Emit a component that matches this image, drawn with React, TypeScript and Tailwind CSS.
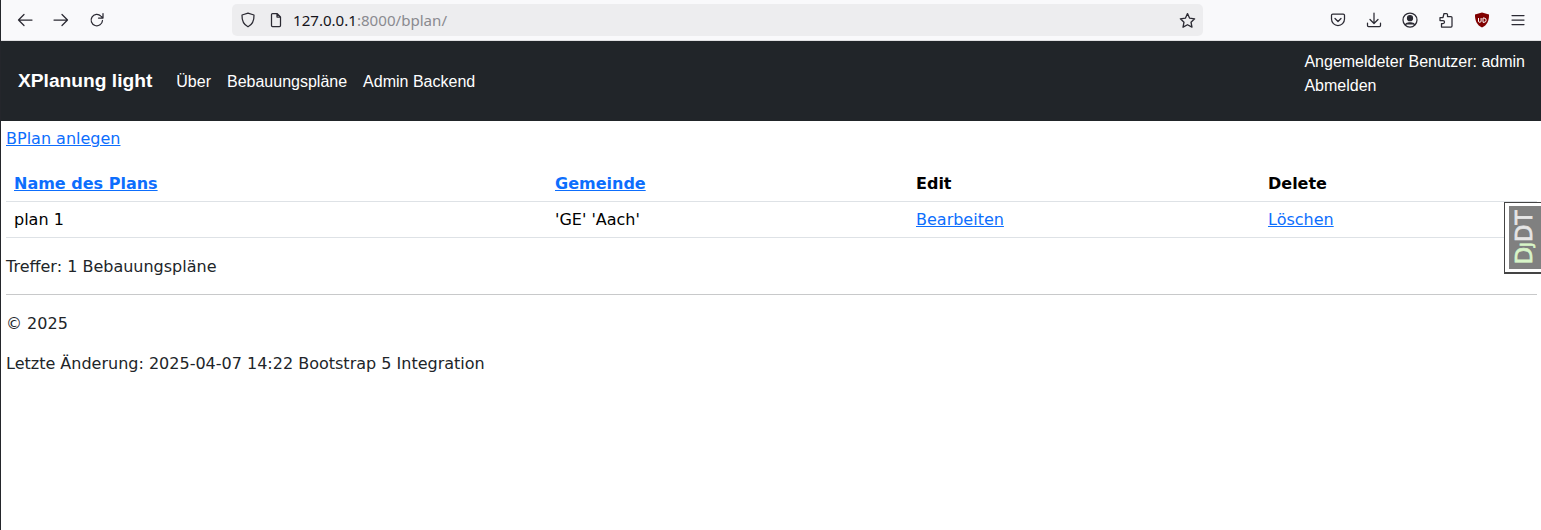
import React from "react";

const Ic = ({ children, cls = "" }: { children: React.ReactNode; cls?: string }) => (
  <svg viewBox="0 0 16 16" fill="none" stroke="#2b2a33" strokeWidth={1.25} strokeLinecap="round" strokeLinejoin="round" className={"w-4 h-4 shrink-0 " + cls}>
    {children}
  </svg>
);

const A = ({ children, cls = "" }: { children: React.ReactNode; cls?: string }) => (
  <a href="#" className={"text-[#0d6efd] underline " + cls}>{children}</a>
);

export default function App() {
  return (
    <div className="relative min-h-[530px] border-l border-[#24262b] bg-white font-['DejaVu_Sans',sans-serif] text-base text-[#212529]">
      <div className="flex h-[41px] items-center border-b border-[#e0e0e2] bg-[#f9f9fb] pl-[16px] pr-[15px]">
        <div className="flex items-center gap-5">
          <Ic><path d="M15 8H1.500M7 2.500 1.500 8 7 13.500" /></Ic>
          <Ic><path d="M1 8h13.500M9 2.500 14.500 8 9 13.500" /></Ic>
          <Ic><path d="M13.500 8.500a5.700 5.700 0 1 1-1.600-4.400L14 6M14 1.500V6H9.500" /></Ic>
        </div>
        <div className="ml-[127px] flex h-8 w-[971px] items-center rounded-[5px] bg-[#ededef] pl-2 pr-[7px]">
          <Ic><path d="M8 1.200 14 3c.2 5.500-1.500 9.500-6 11.800C3.500 12.500 1.800 8.500 2 3z" /></Ic>
          <Ic cls="ml-[12px]"><path d="M3.500 2.500A1 1 0 0 1 4.500 1.500H9L12.500 5v8.500a1 1 0 0 1-1 1h-7a1 1 0 0 1-1-1zM9 1.500V5h3.500" /></Ic>
          <span className="ml-[9px] font-['Noto_Sans',sans-serif] text-[15.1px] text-[#15141a]">127.0.0.1<span className="text-[#8a8a8f]">:8000/bplan/</span></span>
          <Ic cls="ml-auto w-[17px] h-[17px]"><path d="m8 1.500 2 4.300 4.700.6-3.400 3.200.9 4.700L8 12l-4.200 2.300.9-4.700L1.300 6.400 6 5.800z" /></Ic>
        </div>
        <div className="ml-auto flex items-center gap-5">
          <Ic><path d="M2.800 2h10.400c.8 0 1.300.6 1.300 1.300V7a6.500 6.500 0 0 1-13 0V3.300C1.500 2.600 2 2 2.800 2z" /><path d="m5 6.500 3 3 3-3" /></Ic>
          <Ic><path d="M8 1v10M4 7.500 8 11.500l4-4M1.500 11v2.500a1 1 0 0 0 1 1h11a1 1 0 0 0 1-1V11" /></Ic>
          <Ic><circle cx="8" cy="8" r="7" /><circle cx="8" cy="6.200" r="2.500" fill="#2b2a33" /><path d="M3.500 12.500c1-2.300 8-2.300 9 0" fill="#2b2a33" /></Ic>
          <Ic><path d="M6 1.500h2.500a1 1 0 0 1 1 1V4.500h3.500a1 1 0 0 1 1 1V14a1 1 0 0 1-1 1H3.500V11.500h1.500a1.500 1.500 0 0 0 0-3H2V5.500h3z" /></Ic>
          <svg viewBox="0 0 16 16" className="h-4 w-4 shrink-0">
            <path d="M8 .5 15 2.500c.2 6-2 10.800-7 13-5-2.200-7.200-7-7-13z" fill="#800000" />
            <path d="M4.500 6v3a1.300 1.300 0 0 0 2.600 0V6M9 6v4.300h1a2.100 2.100 0 0 0 0-4.300z" stroke="#fff" strokeWidth={1} fill="none" />
          </svg>
          <Ic><path d="M2 3.500h12M2 8h12M2 12.500h12" /></Ic>
        </div>
      </div>

      <nav className="flex h-20 items-center justify-between bg-[#212529] pl-[17px] pr-4 font-['Liberation_Sans',sans-serif] text-white">
        <div className="flex items-center">
          <span className="text-[19.2px] font-bold leading-[30px]">XPlanung light</span>
          <div className="ml-6 flex gap-4 pt-px">
            <span>Über</span>
            <span>Bebauungspläne</span>
            <span>Admin Backend</span>
          </div>
        </div>
        <div className="mb-[14px] flex flex-col gap-0 leading-6">
          <span>Angemeldeter Benutzer: admin</span>
          <span>Abmelden</span>
        </div>
      </nav>

      <main className="pl-[5px] pr-[4px]">
        <p className="h-11 leading-[36px]"><A>BPlan anlegen</A></p>
        <table className="w-full table-fixed text-black">
          <colgroup>
            <col className="w-[541px]" />
            <col className="w-[361px]" />
            <col className="w-[352px]" />
            <col />
          </colgroup>
          <thead>
            <tr className="border-b border-[#dee2e6]">
              <th className="px-2 pt-[7px] pb-[5px] text-left"><A>Name des Plans</A></th>
              <th className="px-2 pt-[7px] pb-[5px] text-left"><A>Gemeinde</A></th>
              <th className="px-2 pt-[7px] pb-[5px] text-left">Edit</th>
              <th className="px-2 pt-[7px] pb-[5px] text-left">Delete</th>
            </tr>
          </thead>
          <tbody>
            <tr className="border-b border-[#dee2e6]">
              <td className="px-2 pt-1.5 pb-[5px]">plan 1</td>
              <td className="px-2 pt-1.5 pb-[5px]">'GE' 'Aach'</td>
              <td className="px-2 pt-1.5 pb-[5px]"><A>Bearbeiten</A></td>
              <td className="px-2 pt-1.5 pb-[5px]"><A>Löschen</A></td>
            </tr>
          </tbody>
        </table>
        <p className="mt-[17px] leading-6">Treffer: 1 Bebauungspläne</p>
        <hr className="mt-[15px] border-t border-[#c8c9ca]" />
        <p className="mt-[17px] leading-6">© 2025</p>
        <p className="mt-4 leading-6">Letzte Änderung: 2025-04-07 14:22 Bootstrap 5 Integration</p>
      </main>

      <div className="absolute right-0 top-[202px] flex h-[72px] w-[37px] items-center justify-center border-t border-l border-b-2 border-[#444] bg-white pl-[4px] pt-[3px] pb-[3px]">
        <div className="flex h-full w-full items-center justify-center bg-[#808080]">
          <span className="-rotate-90 whitespace-nowrap font-['DejaVu_Sans',sans-serif] text-[23px] leading-none text-[#e6e6e6] [-webkit-text-stroke:0.7px]">
            <span className="text-[#d8f5c8]">D</span><span className="text-[15px] text-[#d8f5c8]">J</span>DT
          </span>
        </div>
      </div>
    </div>
  );
}
